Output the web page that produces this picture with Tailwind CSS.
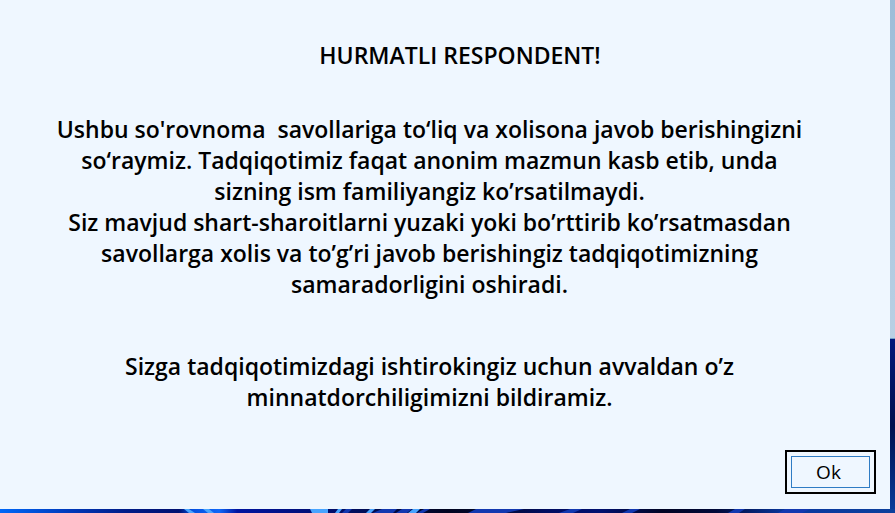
<!DOCTYPE html>
<html lang="uz">
<head>
<meta charset="utf-8">
<title>Hurmatli respondent</title>
<script src="https://cdn.jsdelivr.net/npm/@tailwindcss/browser@4"></script>
</head>
<body class="relative flex min-h-screen flex-col bg-[#031a6b] pr-[5px] pb-1 font-['Open_Sans','Noto_Sans',sans-serif] text-black">
<!-- Desktop wallpaper behind the dialog -->
<div class="absolute inset-y-0 right-0 flex w-[5px] flex-col" aria-hidden="true">
  <div class="h-[66%] border-b border-[#6f9fc9] bg-linear-to-b from-[#9dbdd8] to-[#b9d0e4]"></div>
  <div class="flex-1 bg-linear-to-b from-[#02187a] via-[#001050] to-[#0b3c9c]"></div>
</div>
<svg class="absolute inset-x-0 bottom-0 h-1 w-full" viewBox="0 0 895 4" preserveAspectRatio="none" aria-hidden="true">
  <defs>
    <linearGradient id="wall" x1="0" x2="1">
      <stop offset="0" stop-color="#0068f8"/><stop offset=".08" stop-color="#0038b8"/><stop offset=".14" stop-color="#001c88"/><stop offset=".2" stop-color="#001070"/>
      <stop offset=".215" stop-color="#0450e0"/><stop offset=".245" stop-color="#1068f8"/><stop offset=".265" stop-color="#0014a0"/><stop offset=".33" stop-color="#001080"/>
      <stop offset=".42" stop-color="#000c50"/><stop offset=".5" stop-color="#000420"/><stop offset=".55" stop-color="#020a30"/><stop offset=".61" stop-color="#000c60"/>
      <stop offset=".67" stop-color="#001070"/><stop offset=".74" stop-color="#000424"/><stop offset=".8" stop-color="#000838"/><stop offset=".88" stop-color="#0838a0"/><stop offset="1" stop-color="#0c409c"/>
    </linearGradient>
  </defs>
  <path d="M0 0H895V4H0Z" fill="url(#wall)"/>
  <path d="M184 0h5l6 4h-6ZM203 0h6l5 4h-6ZM310 0h18v4h-16ZM338 0h4l-3 4h-4ZM370 0h5l-4 4h-5ZM413 0h7l-4 4h-8Z" fill="#48a4ff"/>
  <path d="M346 0h6l-4 4h-6ZM382 0h15l-4 4h-20ZM402 0h10l-5 4h-11ZM424 0h6l-7 4h-6ZM476 0h48l-18 4h-38ZM570 0h12l-9 4h-14ZM630 0h10l-8 4h-10ZM735 0h10l-6 4h-11ZM785 0h25l-8 4h-24Z" fill="#1238b0"/>
</svg>

<main role="dialog" aria-labelledby="title" class="relative flex flex-1 flex-col bg-[#eff7ff] pt-10">
  <h1 id="title" class="pl-[30px] text-center text-[23px] leading-[31px] font-[650]">HURMATLI RESPONDENT!</h1>
  <div class="pt-[43px] pr-[31px] text-center text-[23px] leading-[31px] font-[650]">
    <p>Ushbu so'rovnoma&nbsp; savollariga to‘liq va xolisona javob berishingizni<br>so‘raymiz. Tadqiqotimiz faqat anonim mazmun kasb etib, unda<br>sizning ism familiyangiz ko’rsatilmaydi.</p>
    <p>Siz mavjud shart-sharoitlarni yuzaki yoki bo’rttirib ko’rsatmasdan<br>savollarga xolis va to’g’ri javob berishingiz tadqiqotimizning<br>samaradorligini oshiradi.</p>
    <p class="pt-[51px]">Sizga tadqiqotimizdagi ishtirokingiz uchun avvaldan o’z<br>minnatdorchiligimizni bildiramiz.</p>
  </div>
  <div class="mt-auto flex justify-end pr-3.5 pb-[15px]">
    <button type="button" class="h-11 w-[91px] border-2 border-black p-1 text-[19px] leading-6 font-medium"><span class="flex h-full items-center justify-center border border-[#2f7cc4] pr-1">Ok</span></button>
  </div>
</main>
</body>
</html>
